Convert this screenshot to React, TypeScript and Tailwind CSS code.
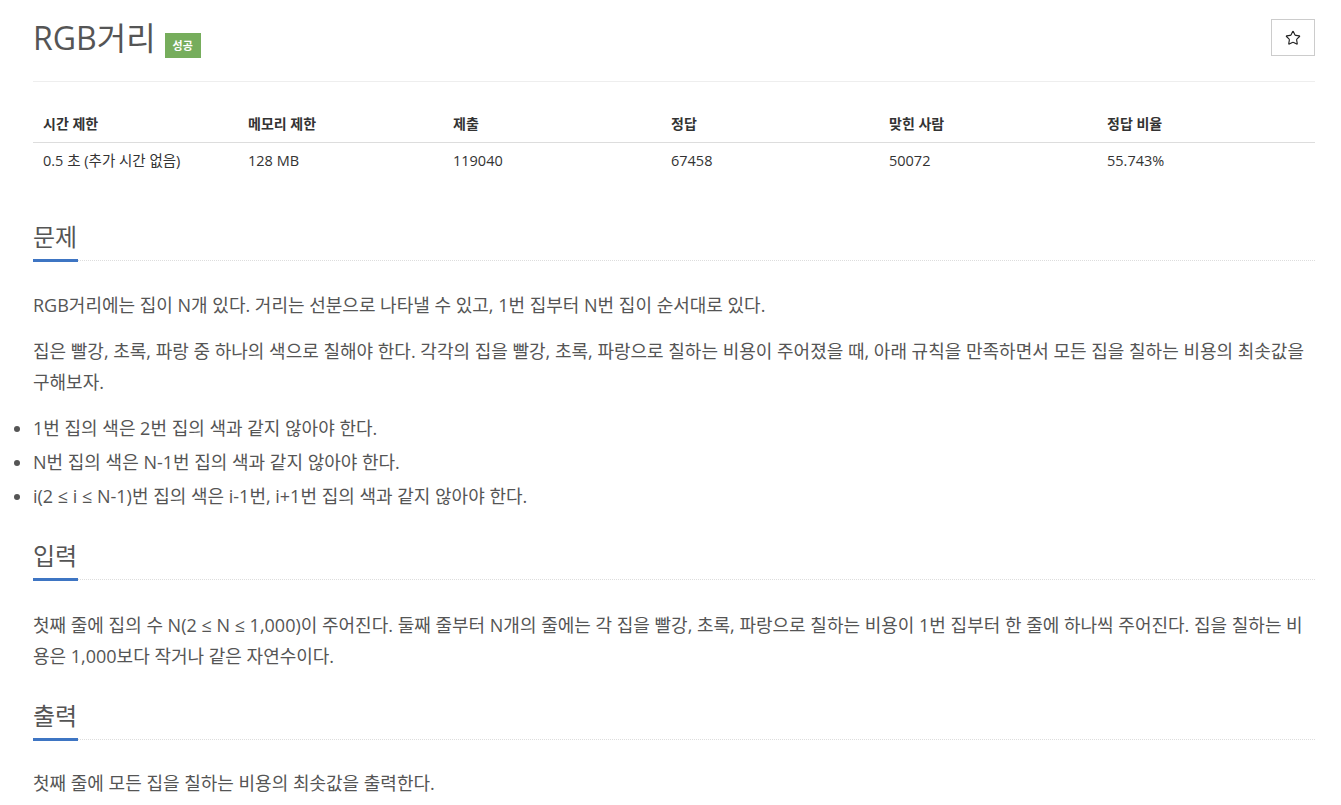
import { Star } from "lucide-react";

const font = { fontFamily: '"Open Sans", "Noto Sans CJK KR", sans-serif' };

const stats = [
  { label: "시간 제한", value: "0.5 초 (추가 시간 없음)" },
  { label: "메모리 제한", value: "128 MB" },
  { label: "제출", value: "119040" },
  { label: "정답", value: "67458" },
  { label: "맞힌 사람", value: "50072" },
  { label: "정답 비율", value: "55.743%" },
];

function Headline({ title, first }: { title: string; first?: boolean }) {
  return (
    <div className={`flex items-end ${first ? "mt-[42px]" : "mt-[28px]"}`}>
      <h2 className="text-[24px] leading-[32px] pb-[6px] text-[#555] border-b-[3px] border-[#3e75c3] pr-[1px]">
        {title}
      </h2>
      <div className="flex-1 border-b border-dotted border-[#ddd] mb-[1px]"></div>
    </div>
  );
}

export default function App() {
  return (
    <div className="bg-white min-h-screen pl-[33px] pr-[26px] text-[#555]" style={font}>
      {/* Title */}
      <div className="flex justify-between items-start pt-[19px] pb-[23px] border-b border-[#eee]">
        <div className="flex items-baseline">
          <h1 className="text-[32px] leading-[37px] text-[#555]">RGB거리</h1>
          <span className="ml-[9px] bg-[#76ad5c] text-white text-[11px] font-semibold leading-[25px] px-[8px] h-[25px]">
            성공
          </span>
        </div>
        <button className="w-[44px] h-[37px] border border-[#ccc] flex items-center justify-center bg-white">
          <Star size={16} strokeWidth={1.7} color="#222" />
        </button>
      </div>

      {/* Stats table */}
      <div className="mt-[24px] text-[14px]">
        <div className="grid grid-cols-[205px_205px_218px_218px_218px_1fr] border-b border-[#ddd]">
          {stats.map((s) => (
            <div key={s.label} className="px-[10px] py-[8px] leading-[20px] font-bold text-[#333]">
              {s.label}
            </div>
          ))}
        </div>
        <div className="grid grid-cols-[205px_205px_218px_218px_218px_1fr]">
          {stats.map((s) => (
            <div key={s.label} className="px-[10px] py-[8px] leading-[20px] text-[14.5px] text-[#333]">
              {s.value}
            </div>
          ))}
        </div>
      </div>

      {/* 문제 */}
      <Headline title="문제" first />
      <div className="mt-[28px] text-[18px] leading-[31px] flex flex-col gap-[15px]">
        <p>RGB거리에는 집이 N개 있다. 거리는 선분으로 나타낼 수 있고, 1번 집부터 N번 집이 순서대로 있다.</p>
        <p>
          집은 빨강, 초록, 파랑 중 하나의 색으로 칠해야 한다. 각각의 집을 빨강, 초록, 파랑으로 칠하는 비용이 주어졌을 때, 아래 규칙을 만족하면서 모든 집을 칠하는 비용의 최솟값을 구해보자.
        </p>
        <ul className="list-disc pl-0 flex flex-col gap-[3px]">
          <li>1번 집의 색은 2번 집의 색과 같지 않아야 한다.</li>
          <li>N번 집의 색은 N-1번 집의 색과 같지 않아야 한다.</li>
          <li>i(2 ≤ i ≤ N-1)번 집의 색은 i-1번, i+1번 집의 색과 같지 않아야 한다.</li>
        </ul>
      </div>

      {/* 입력 */}
      <Headline title="입력" />
      <div className="mt-[29px] text-[18px] leading-[31px]">
        <p>
          첫째 줄에 집의 수 N(2 ≤ N ≤ 1,000)이 주어진다. 둘째 줄부터 N개의 줄에는 각 집을 빨강, 초록, 파랑으로 칠하는 비용이 1번 집부터 한 줄에 하나씩 주어진다. 집을 칠하는 비용은 1,000보다 작거나 같은 자연수이다.
        </p>
      </div>

      {/* 출력 */}
      <Headline title="출력" />
      <div className="mt-[27px] text-[18px] leading-[31px] pb-[20px]">
        <p>첫째 줄에 모든 집을 칠하는 비용의 최솟값을 출력한다.</p>
      </div>
    </div>
  );
}
